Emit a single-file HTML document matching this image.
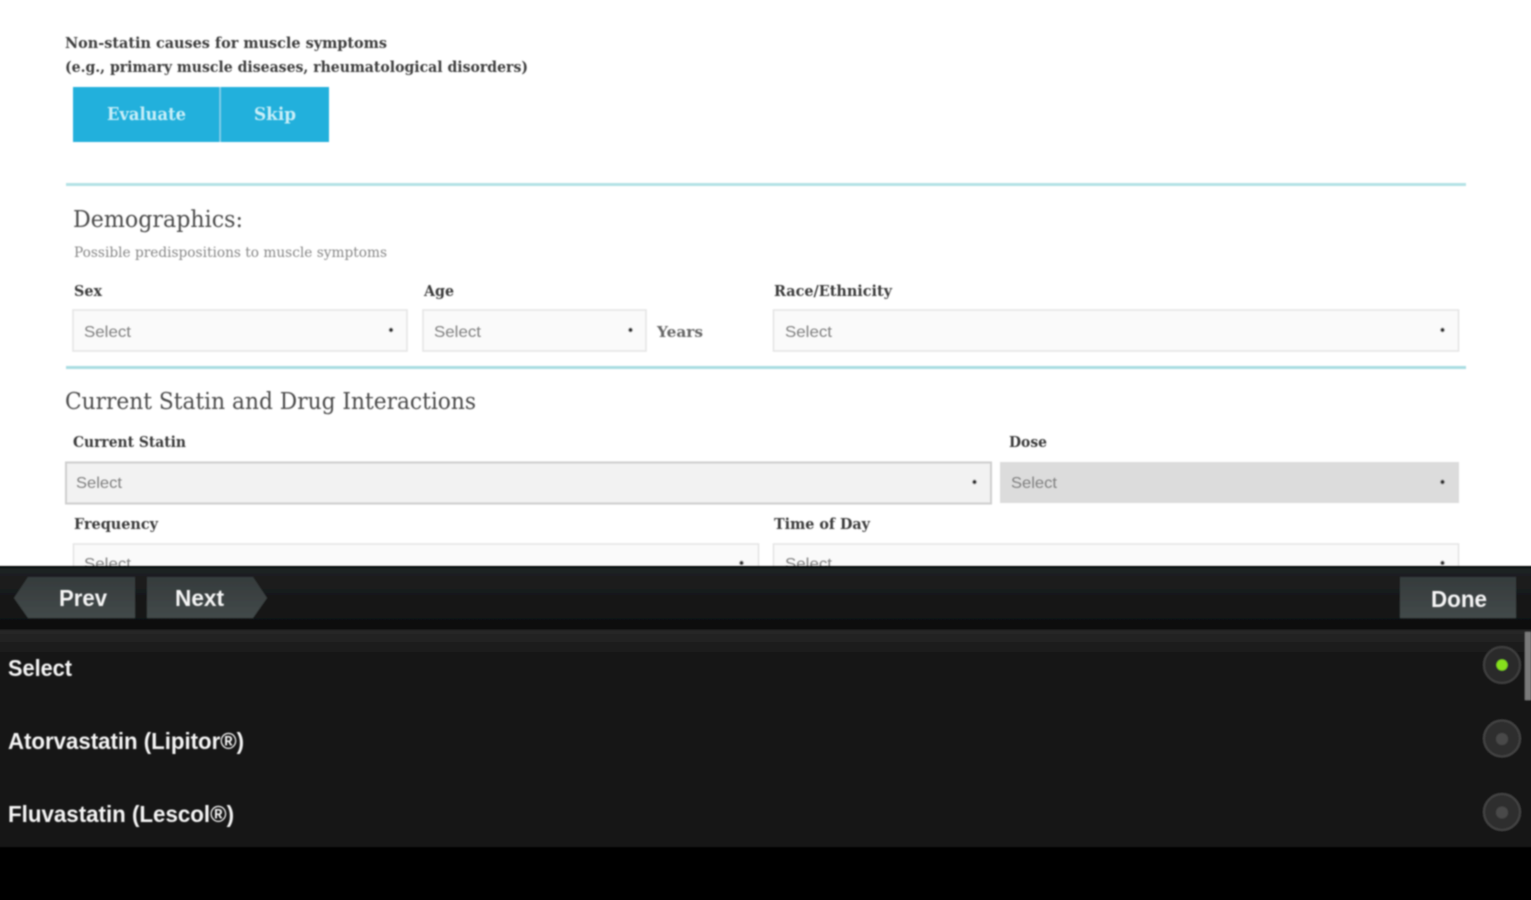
<!DOCTYPE html>
<html lang="en">
<head>
<meta charset="utf-8">
<title>Statin form</title>
<style>
html,body{margin:0;padding:0;width:1531px;height:900px;overflow:hidden;background:#fff}
svg{display:block}
.s{font-family:"DejaVu Serif","Liberation Serif",serif}
.a{font-family:"Liberation Sans",sans-serif}
.lab{font-size:15px;font-weight:bold;fill:#3a3a3a}
.sel{font-size:16px;fill:#808080}
.arr{fill:#333}
.h{fill:#4c4c4c}
.w{fill:#f4f4f4;font-size:23px;font-weight:bold}
</style>
</head>
<body>
<svg width="1531" height="900" viewBox="0 0 1531 900" xmlns="http://www.w3.org/2000/svg">
<defs>
<filter id="b" x="-2%" y="-2%" width="104%" height="104%"><feGaussianBlur stdDeviation="0.9"/></filter>
<filter id="t" x="-5%" y="-30%" width="110%" height="160%"><feGaussianBlur stdDeviation="0.8"/></filter>
<linearGradient id="bar" x1="0" y1="0" x2="0" y2="1"><stop offset="0" stop-color="#1f2122"/><stop offset="1" stop-color="#0e0e0e"/></linearGradient>
<linearGradient id="btn" x1="0" y1="0" x2="0" y2="1"><stop offset="0" stop-color="#353b3c"/><stop offset="1" stop-color="#424949"/></linearGradient>
<linearGradient id="lst" x1="0" y1="0" x2="0" y2="1"><stop offset="0" stop-color="#272727"/><stop offset="1" stop-color="#181818"/></linearGradient>
</defs>

<rect width="1531" height="900" fill="#fff"/>

<g filter="url(#b)">
<rect x="73" y="87" width="256" height="55" fill="#22b0dc"/>
<rect x="219.500" y="87" width="1.2" height="55" fill="#8fd8ee"/>
<rect x="66" y="183" width="1400" height="3" fill="#b4e2e5"/>
<rect x="66" y="366" width="1400" height="3" fill="#a9dde2"/>

<rect x="73" y="310" width="334" height="41" fill="#fafafa" stroke="#e4e4e4" stroke-width="1.5"/>
<rect x="423" y="310" width="223" height="41" fill="#fafafa" stroke="#e4e4e4" stroke-width="1.5"/>
<rect x="773.500" y="310" width="685" height="41" fill="#fafafa" stroke="#e4e4e4" stroke-width="1.5"/>

<rect x="66" y="462.500" width="925" height="41" fill="#f2f2f2" stroke="#cecece" stroke-width="2"/>
<rect x="1000" y="462" width="459" height="41" fill="#dcdcdc"/>

<rect x="73.500" y="544" width="685" height="41" fill="#fafafa" stroke="#e4e4e4" stroke-width="1.5"/>
<rect x="773.500" y="544" width="685" height="41" fill="#fafafa" stroke="#e4e4e4" stroke-width="1.5"/>

<circle class="arr" cx="391" cy="330" r="2.200"/>
<circle class="arr" cx="630.500" cy="330" r="2.200"/>
<circle class="arr" cx="1442.500" cy="330" r="2.200"/>
<circle class="arr" cx="974.500" cy="482" r="2.200"/>
<circle class="arr" cx="1442.500" cy="482" r="2.200"/>
<circle class="arr" cx="741.500" cy="563" r="2.200"/>
<circle class="arr" cx="1442.500" cy="563" r="2.200"/>
</g>

<g filter="url(#t)">
<text class="s" x="65" y="48" font-size="14.500" font-weight="bold" fill="#3c3c3c" textLength="322" lengthAdjust="spacingAndGlyphs">Non-statin causes for muscle symptoms</text>
<text class="s" x="65" y="72" font-size="14.500" font-weight="bold" fill="#3c3c3c" textLength="463" lengthAdjust="spacingAndGlyphs">(e.g., primary muscle diseases, rheumatological disorders)</text>
<text class="s" x="107" y="120" font-size="18" font-weight="bold" fill="#c8eef8" textLength="79" lengthAdjust="spacingAndGlyphs">Evaluate</text>
<text class="s" x="254" y="120" font-size="18" font-weight="bold" fill="#c8eef8" textLength="42" lengthAdjust="spacingAndGlyphs">Skip</text>
<text class="s h" x="73" y="227" font-size="23" textLength="170" lengthAdjust="spacingAndGlyphs">Demographics:</text>
<text class="s" x="74" y="257" font-size="13.500" fill="#888" textLength="313" lengthAdjust="spacingAndGlyphs">Possible predispositions to muscle symptoms</text>
<text class="s lab" x="74" y="296" textLength="28" lengthAdjust="spacingAndGlyphs">Sex</text>
<text class="s lab" x="424" y="296" textLength="30" lengthAdjust="spacingAndGlyphs">Age</text>
<text class="s lab" x="774" y="296" textLength="118" lengthAdjust="spacingAndGlyphs">Race/Ethnicity</text>
<text class="a sel" x="84" y="337" textLength="47" lengthAdjust="spacingAndGlyphs">Select</text>
<text class="a sel" x="434" y="337" textLength="47" lengthAdjust="spacingAndGlyphs">Select</text>
<text class="s" x="657" y="337" font-size="15" font-weight="bold" fill="#666" textLength="46" lengthAdjust="spacingAndGlyphs">Years</text>
<text class="a sel" x="785" y="337" textLength="47" lengthAdjust="spacingAndGlyphs">Select</text>
<text class="s h" x="65" y="409" font-size="23" textLength="411" lengthAdjust="spacingAndGlyphs">Current Statin and Drug Interactions</text>
<text class="s lab" x="73" y="447" textLength="113" lengthAdjust="spacingAndGlyphs">Current Statin</text>
<text class="s lab" x="1009" y="447" textLength="38" lengthAdjust="spacingAndGlyphs">Dose</text>
<text class="a sel" x="76" y="488" textLength="46" lengthAdjust="spacingAndGlyphs">Select</text>
<text class="a sel" x="1011" y="488" textLength="46" lengthAdjust="spacingAndGlyphs">Select</text>
<text class="s lab" x="74" y="529" textLength="84" lengthAdjust="spacingAndGlyphs">Frequency</text>
<text class="s lab" x="774" y="529" textLength="96" lengthAdjust="spacingAndGlyphs">Time of Day</text>
<text class="a sel" x="84" y="569" textLength="47" lengthAdjust="spacingAndGlyphs">Select</text>
<text class="a sel" x="785" y="569" textLength="47" lengthAdjust="spacingAndGlyphs">Select</text>
</g>

<g filter="url(#b)">
<rect x="-4" y="566" width="1539" height="3" fill="#000"/>
<rect x="-4" y="568" width="1539" height="62" fill="url(#bar)"/>
<rect x="-4" y="630" width="1539" height="217" fill="#181818"/>
<rect x="-4" y="630" width="1539" height="24" fill="url(#lst)"/>
<rect x="-4" y="847" width="1539" height="57" fill="#000"/>

<polygon points="14,598 28,577 135,577 135,618 28,618" fill="url(#btn)"/>
<polygon points="147,577 253,577 267,598 253,618 147,618" fill="url(#btn)"/>
<rect x="1400" y="577" width="116" height="41" fill="url(#btn)"/>

<rect x="1525" y="632" width="6" height="68" fill="#7a7a7a"/>

<circle cx="1502" cy="665" r="18" fill="#292929" stroke="#404040" stroke-width="2"/>
<circle cx="1502" cy="665" r="5.500" fill="#86e01c"/>
<circle cx="1502" cy="738.500" r="18" fill="#2d2d2d" stroke="#454545" stroke-width="2"/>
<circle cx="1502" cy="739" r="6" fill="#484848"/>
<circle cx="1502" cy="812" r="18" fill="#2d2d2d" stroke="#454545" stroke-width="2"/>
<circle cx="1502" cy="812.500" r="6" fill="#484848"/>
</g>

<g filter="url(#t)">
<text class="a w" x="59" y="606" textLength="48" lengthAdjust="spacingAndGlyphs">Prev</text>
<text class="a w" x="175" y="606" textLength="49" lengthAdjust="spacingAndGlyphs">Next</text>
<text class="a w" x="1431" y="607" textLength="56" lengthAdjust="spacingAndGlyphs">Done</text>
<text class="a w" x="8" y="676" textLength="64" lengthAdjust="spacingAndGlyphs">Select</text>
<text class="a w" x="8" y="749" textLength="236" lengthAdjust="spacingAndGlyphs">Atorvastatin (Lipitor®)</text>
<text class="a w" x="8" y="822" textLength="226" lengthAdjust="spacingAndGlyphs">Fluvastatin (Lescol®)</text>
</g>
</svg>
</body>
</html>
